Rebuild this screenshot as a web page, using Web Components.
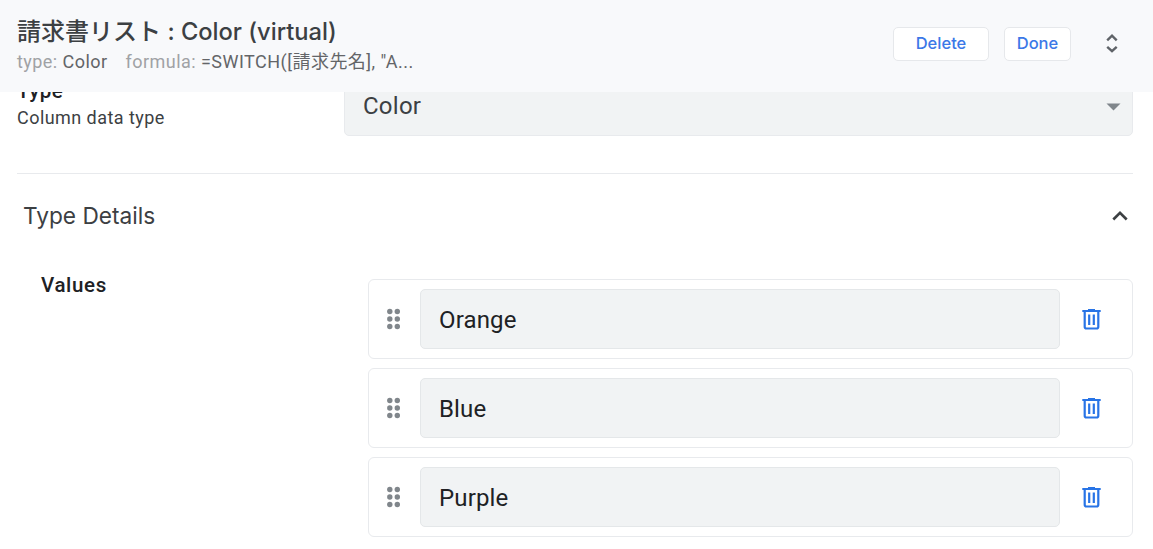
<!DOCTYPE html>
<html lang="ja">
<head>
<meta charset="utf-8">
<title>Column editor</title>
<style>
html,body{margin:0;height:100%;overflow:hidden;background:#fff}
body{font-family:Roboto,"Noto Sans CJK JP",sans-serif;color:#202124}
</style>
</head>
<body>
<column-editor></column-editor>
<script>
function define(name, html){
  const t=document.createElement('template');
  t.innerHTML=html;
  customElements.define(name,class extends HTMLElement{
    constructor(){super();this.attachShadow({mode:'open'}).appendChild(t.content.cloneNode(true));}
  });
}
define('action-button',`<style>
:host{display:block}
button{display:block;box-sizing:border-box;width:100%;height:34px;padding:0 0 2px;border:1px solid #e6e8eb;border-radius:5px;background:#fff;color:#3b78e7;font:500 16.500px/30px Inter,sans-serif}
</style><button><slot></slot></button>`);
define('editor-header',`<style>
:host{display:flex;box-sizing:border-box;height:92px;padding:0 31px 0 17px;background:#f8f9fb;position:relative;z-index:1}
.info{flex:1;padding-top:15px}
h1{margin:0;font:500 24px/34px Inter,"Noto Sans CJK JP",sans-serif;color:#3c4043;white-space:nowrap;height:34px}
.meta{display:flex;gap:18px;font-size:18px;line-height:26px;color:#a0a2a5;white-space:nowrap}
.meta b{font-weight:400;color:#636568}
.type{letter-spacing:.45px}.formula .l{letter-spacing:.45px}.formula b{letter-spacing:.48px}
.actions{display:flex;align-items:flex-start;padding-top:27px}
.del{width:96px;margin-right:15px}.done{width:67px;margin-right:32px}
svg{display:block;margin-top:4px}
</style>
<div class="info"><h1><slot name="title"></slot></h1>
<div class="meta"><span class="type">type: <b>Color</b></span><span class="formula"><span class="l">formula: </span><b>=SWITCH([請求先名], "A...</b></span></div></div>
<div class="actions"><action-button class="del">Delete</action-button><action-button class="done">Done</action-button>
<svg width="19" height="26" viewBox="0 0 19 26" fill="none" stroke="#5f6368" stroke-width="2.400"><path d="M4.200 9.300 9 4.700l4.700 4.600M4.200 15.800 9 20.200l4.700-4.400"/></svg></div>`);
define('select-field',`<style>
:host{display:flex;box-sizing:border-box;height:60px;align-items:center;justify-content:space-between;padding:0 11px 0 18px;background:#f1f3f4;border:1px solid #e8eaed;border-radius:5px;font-size:24px;color:#3c4043;letter-spacing:.25px}
svg{display:block;margin-top:2px}
</style><slot></slot><svg width="15" height="8" viewBox="0 0 15 8"><path d="M.5 .5h14L7.500 7.500z" fill="#80868b"/></svg>`);
define('type-setting',`<style>
:host{display:flex;height:60px}
.label{width:327px;padding-top:1px}
.name{font-weight:500;font-size:20.500px;line-height:28px;letter-spacing:.5px;color:#202124}
.desc{font-size:18px;line-height:26px;letter-spacing:.45px;color:#3c4043}
select-field{flex:1}
</style><div class="label"><div class="name">Type</div><div class="desc">Column data type</div></div><select-field>Color</select-field>`);
define('section-header',`<style>
:host{display:flex;align-items:center;justify-content:space-between;box-sizing:border-box;height:84px;padding:0 5px 0 6px;border-top:1px solid #e8eaed;font:400 22.700px/32px Inter,sans-serif;color:#3c4043}
svg{display:block}
</style><span><slot></slot></span><svg width="16" height="12" viewBox="0 0 16 12" fill="none" stroke="#3c4043" stroke-width="2.600"><path d="m1.300 9.500 6.700-6.700 6.700 6.700"/></svg>`);
define('value-row',`<style>
:host{display:flex;align-items:center;box-sizing:border-box;height:80px;padding:0 31px 0 18px;border:1px solid #e8eaed;border-radius:6px;background:#fff}
.field{flex:1;box-sizing:border-box;height:60px;margin:0 22px 0 19px;padding:0 18px;border:1px solid #e4e7e9;border-radius:5px;background:#f1f3f4;font-size:24px;line-height:60px;letter-spacing:.15px;color:#202124}
svg{display:block;flex:none}
</style>
<svg width="14" height="22" viewBox="0 0 14 22" fill="#80868b"><circle cx="2.800" cy="3.500" r="2.700"/><circle cx="10.300" cy="3.500" r="2.700"/><circle cx="2.800" cy="11" r="2.700"/><circle cx="10.300" cy="11" r="2.700"/><circle cx="2.800" cy="18.500" r="2.700"/><circle cx="10.300" cy="18.500" r="2.700"/></svg>
<div class="field"><slot></slot></div>
<svg width="19" height="22" viewBox="0 0 19 22" fill="none" stroke="#2874e6" stroke-width="2.200"><path d="M.3 3h18.400M6 2h7M2.700 3v15.800q0 1.700 1.700 1.700h10.200q1.700 0 1.700-1.700V3"/><path d="M7.200 6.500v10.500M11.800 6.500v10.500"/></svg>`);
define('values-setting',`<style>
:host{display:flex;padding-left:24px}
.label{width:327px;font-weight:500;font-size:20.500px;line-height:28px;letter-spacing:.65px;margin-top:14px}
.rows{flex:1;display:flex;flex-direction:column;gap:9px;padding-top:22px}
</style><div class="label">Values</div><div class="rows"><slot></slot></div>`);
define('column-editor',`<style>
:host{display:flex;flex-direction:column;height:549px;overflow:hidden}
main{flex:1;min-height:0;padding:0 20px 0 17px}
type-setting{margin:-16px 0 37px}
.latin{font-size:23.700px}
</style>
<editor-header><span slot="title">請求書リスト <span class="latin">: Color (virtual)</span></span></editor-header>
<main><type-setting></type-setting><section-header>Type Details</section-header>
<values-setting><value-row>Orange</value-row><value-row>Blue</value-row><value-row>Purple</value-row></values-setting></main>`);
</script>
</body>
</html>
